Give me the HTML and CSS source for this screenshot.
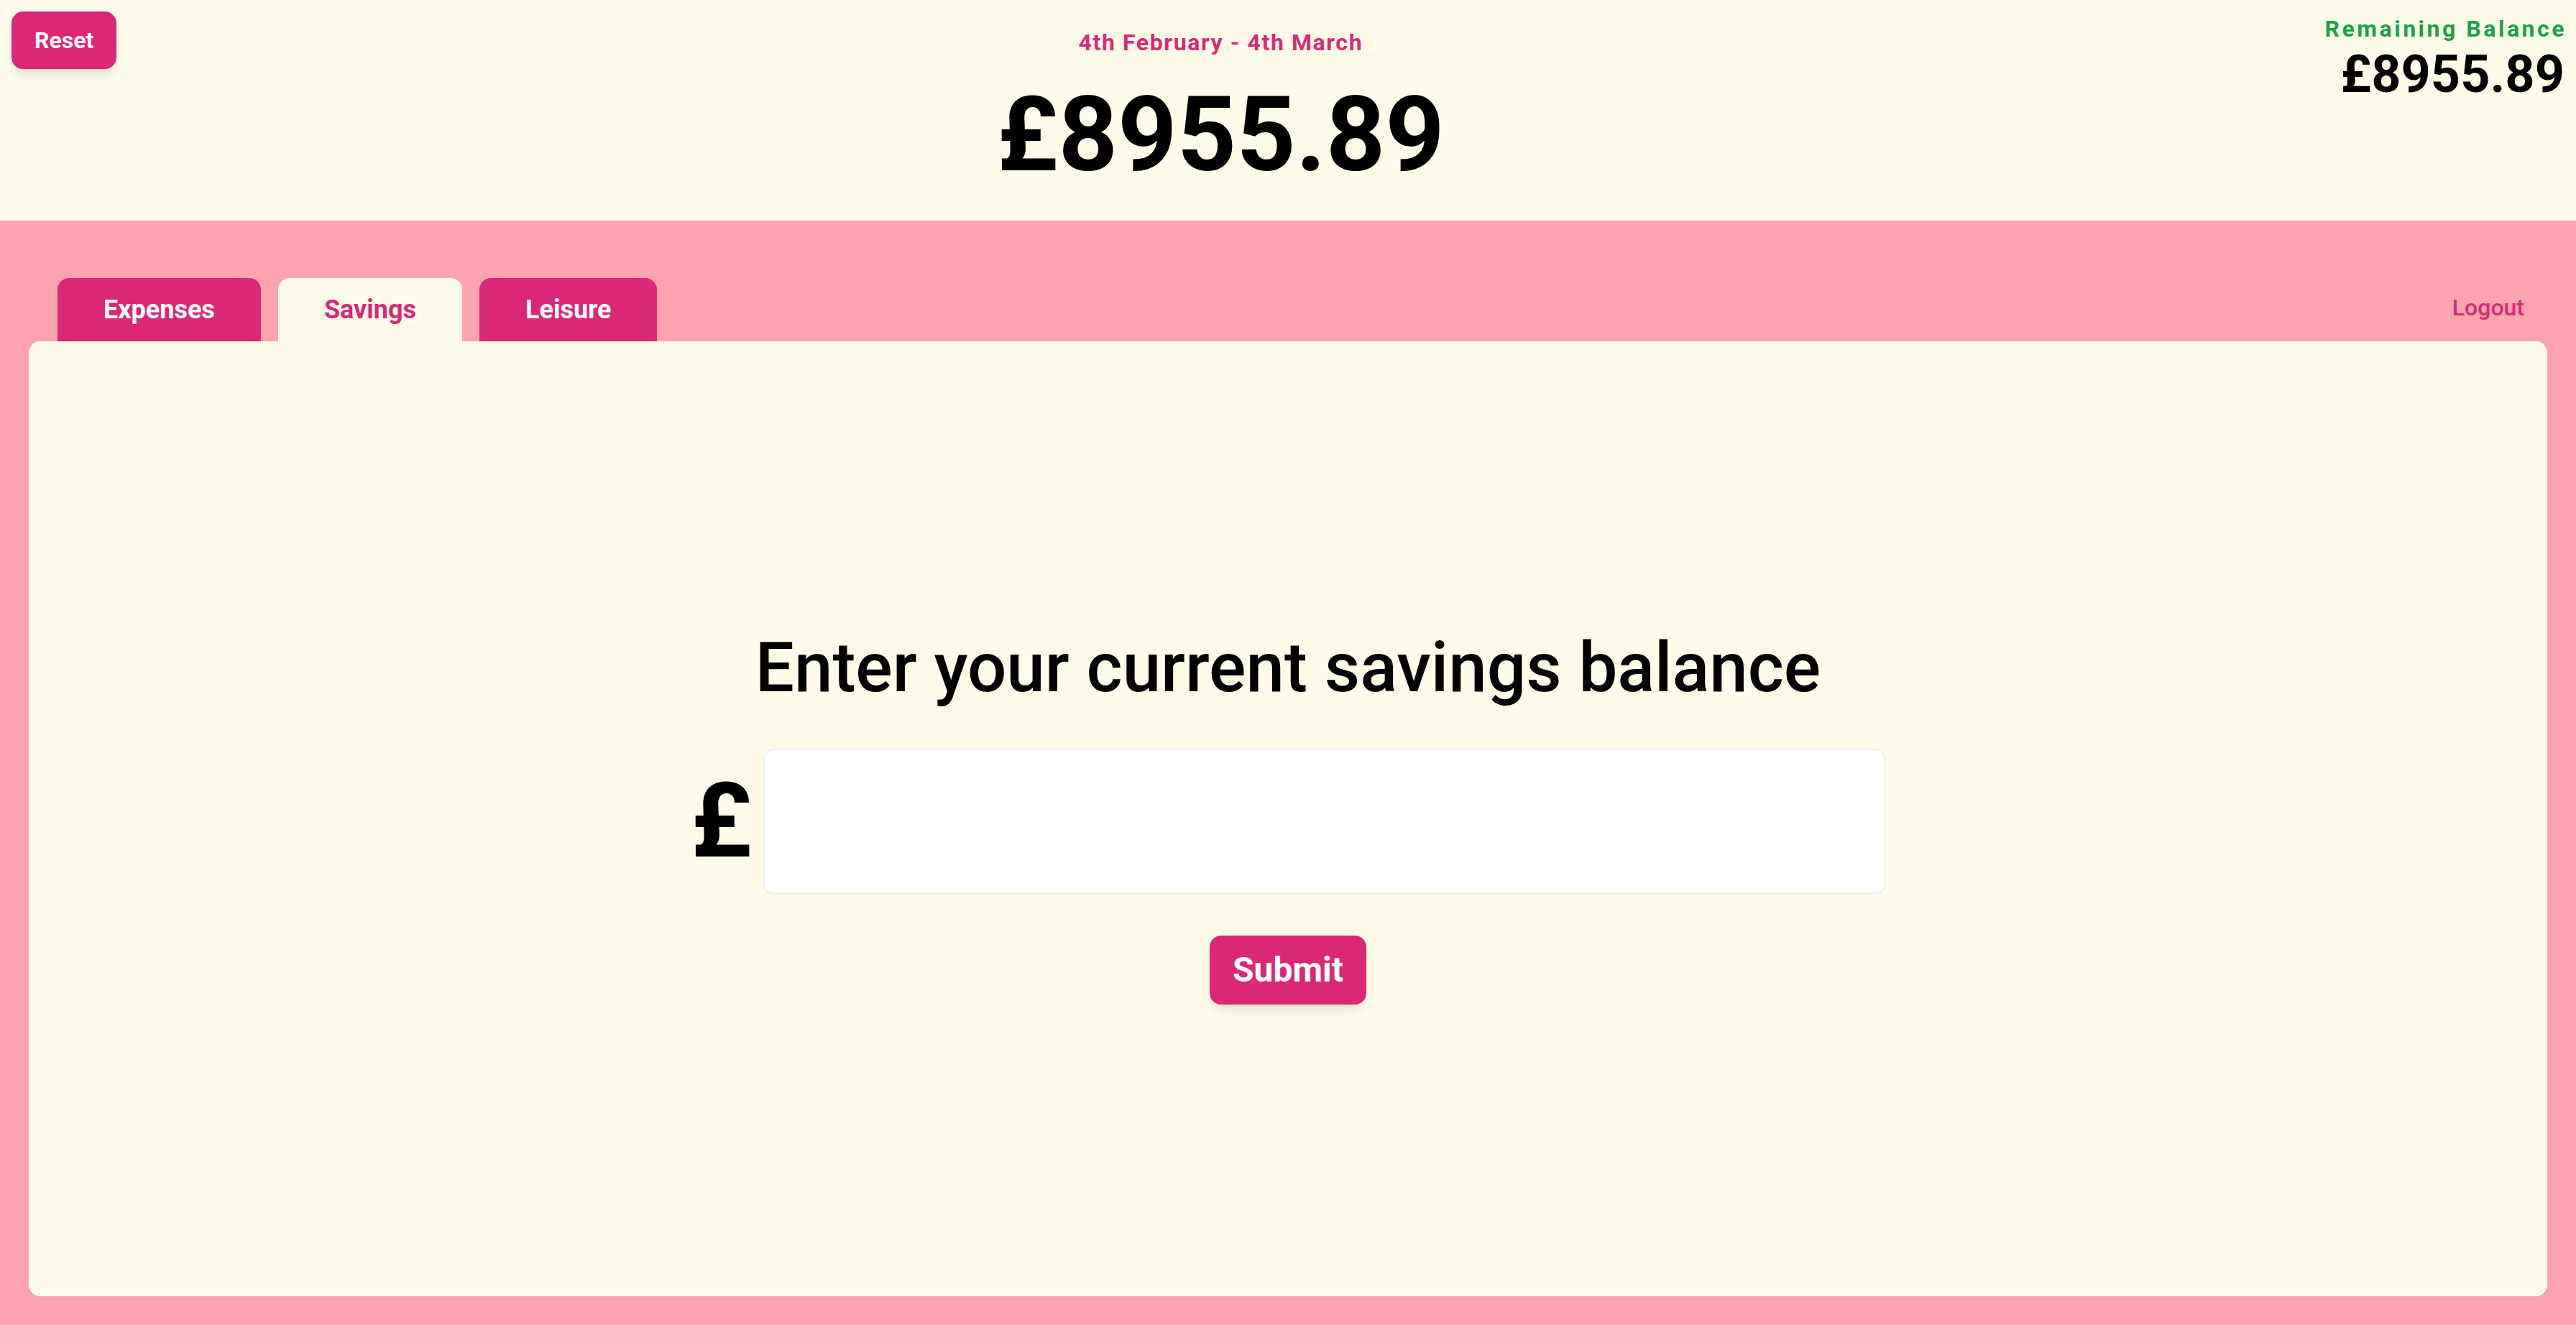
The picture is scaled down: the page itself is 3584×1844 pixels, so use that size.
FILE: index.html
```html
<!DOCTYPE html>
<html lang="en">
<head>
<meta charset="utf-8">
<title>Budget</title>
<link rel="stylesheet" href="styles.css">
</head>
<body>
<header class="top">
  <button class="btn btn-reset">Reset</button>
  <div class="period">
    <div class="period-dates">4th February - 4th March</div>
    <div class="period-amount">£8955.89</div>
  </div>
  <div class="remaining">
    <div class="remaining-label">Remaining Balance</div>
    <div class="remaining-amount">£8955.89</div>
  </div>
</header>
<main class="main">
  <nav class="tabbar">
    <div class="tabs">
      <a class="tab">Expenses</a>
      <a class="tab tab-active">Savings</a>
      <a class="tab">Leisure</a>
    </div>
    <a class="logout">Logout</a>
  </nav>
  <section class="panel">
    <h1 class="prompt">Enter your current savings balance</h1>
    <div class="entry">
      <span class="currency">£</span>
      <input class="amount-input" type="text">
    </div>
    <button class="btn btn-submit">Submit</button>
  </section>
</main>
</body>
</html>
```

FILE: styles.css
```css
* { box-sizing: border-box; }
html, body { margin: 0; padding: 0; }
body {
  font-family: Roboto, "Liberation Sans", sans-serif;
  background: #fefce8;
  color: #000;
  width: 3584px;
  height: 1844px;
  display: flex;
  flex-direction: column;
  overflow: hidden;
}
.top {
  display: flex;
  justify-content: space-between;
  align-items: flex-start;
  padding: 16px;
  height: 307px;
  background: #fefce8;
}
.btn {
  font-family: Roboto, "Liberation Sans", sans-serif;
  background: #db2777;
  color: #fff;
  border: none;
  cursor: pointer;
}
.btn-reset {
  font-size: 32px;
  font-weight: 700;
  line-height: 48px;
  padding: 16px 32px;
  border-radius: 16px;
  box-shadow: 0 10px 15px -3px rgba(0,0,0,0.1), 0 4px 6px -4px rgba(0,0,0,0.1);
}
.period {
  text-align: center;
  padding-top: 19px;
}
.period-dates {
  color: #db2777;
  font-size: 32px;
  font-weight: 700;
  line-height: 48px;
  letter-spacing: 0.05em;
}
.period-amount {
  font-size: 144px;
  font-weight: 700;
  line-height: 1;
  margin-top: 33px;
}
.remaining {
  text-align: right;
}
.remaining-label {
  color: #16a34a;
  font-size: 32px;
  font-weight: 700;
  line-height: 48px;
  letter-spacing: 0.11em;
  margin-right: -3px;
}
.remaining-amount {
  font-size: 72px;
  font-weight: 700;
  line-height: 1;
  margin-top: 4px;
}
.main {
  flex: 1;
  background: #fda4af;
  padding: 80px 40px 40px;
  display: flex;
  flex-direction: column;
}
.tabbar {
  display: flex;
  justify-content: space-between;
  align-items: center;
  padding: 0 32px 0 40px;
}
.tabs {
  display: flex;
  gap: 24px;
}
.tab {
  display: block;
  height: 88px;
  line-height: 88px;
  padding: 0 64px;
  background: #db2777;
  color: #fff;
  font-size: 36px;
  font-weight: 700;
  border-radius: 16px 16px 0 0;
}
.tab-active {
  background: #fefce8;
  color: #db2777;
}
.logout {
  color: #db2777;
  font-size: 32px;
  font-weight: 500;
  line-height: 48px;
  margin-top: -6px;
}
.panel {
  flex: 1;
  background: #fefce8;
  border-radius: 16px;
  display: flex;
  flex-direction: column;
  align-items: center;
  justify-content: center;
}
.prompt {
  margin: 0;
  font-size: 96px;
  font-weight: 500;
  line-height: 1;
}
.entry {
  display: flex;
  align-items: center;
  gap: 16px;
  margin-top: 65px;
}
.currency {
  font-size: 144px;
  font-weight: 700;
  line-height: 1;
}
.amount-input {
  width: 1561px;
  height: 202px;
  background: #fff;
  border: 2px solid #eef2f7;
  border-radius: 14px;
  box-shadow: 0 1px 2px rgba(0,0,0,0.05);
  font-size: 64px;
  padding: 0 24px;
  outline: none;
}
.btn-submit {
  margin-top: 58px;
  font-size: 48px;
  font-weight: 700;
  line-height: 48px;
  padding: 24px 32px;
  border-radius: 16px;
  box-shadow: 0 10px 15px -3px rgba(0,0,0,0.1), 0 4px 6px -4px rgba(0,0,0,0.1);
}
```
